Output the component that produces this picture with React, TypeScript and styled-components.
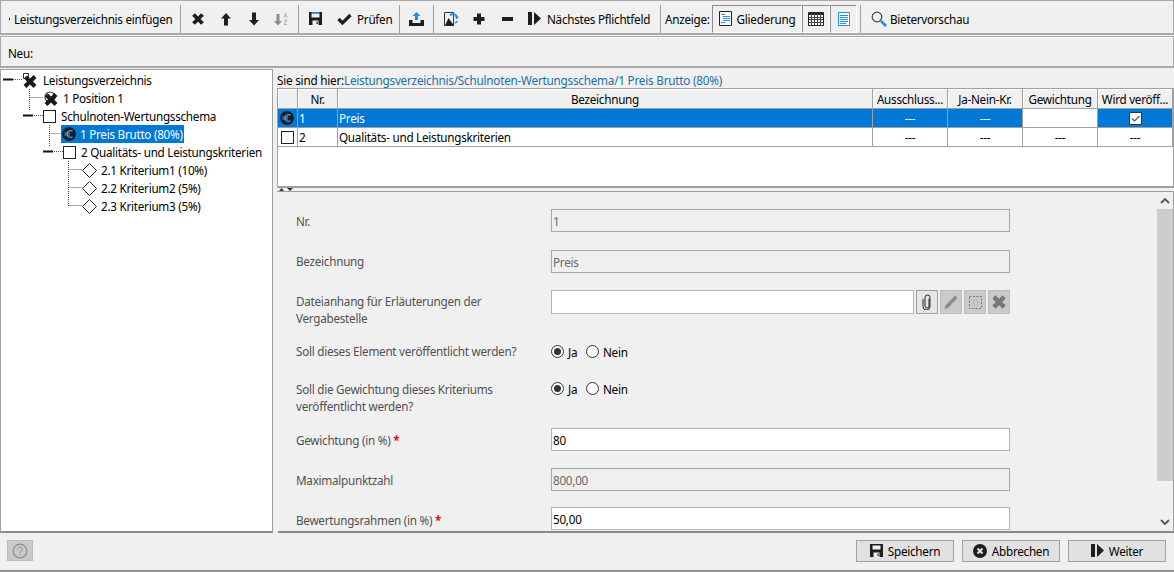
import React from "react";
import styled, { createGlobalStyle } from "styled-components";

const Global = createGlobalStyle`
  html, body { margin: 0; padding: 0; background: #f0f0f0; }
  body { font-family: "Noto Sans", "Open Sans", sans-serif; font-size: 11.7px; color: #000; overflow: hidden; }
  * { box-sizing: border-box; }
`;

const LS = "-0.26px";

const Page = styled.div`
  width: 1174px; height: 572px; display: flex; flex-direction: column; background: #f0f0f0; overflow: hidden;
`;
const Toolbar = styled.div`
  height: 35px; flex: none; display: flex; align-items: center; padding: 3px 0 0 1px;
  border: 1px solid #a9a9a9; border-width: 1px 1px 2px 1px;
`;
const Label = styled.span`
  white-space: nowrap; letter-spacing: ${LS}; line-height: 16px;
`;
const InsertItem = styled.div`
  width: 174px; display: flex; align-items: center; padding-left: 7px; gap: 4px;
`;
const Dot = styled.span`width: 1px; height: 2px; background: #222; margin-top: 1px;`;
const Sep = styled.div<{ $ml?: number }>`
  width: 8px; height: 28px; flex: none; display: flex; justify-content: center; margin-left: ${p => p.$ml ?? 0}px;
  &::before { content: ""; width: 1px; height: 100%; background: #a0a0a0; }
`;
const ToolBtn = styled.div<{ $w?: number; $pl?: number; $gap?: number }>`
  width: ${p => p.$w ?? 28}px; height: 26px; flex: none; display: flex; align-items: center;
  justify-content: ${p => (p.$pl != null ? "flex-start" : "center")};
  padding-left: ${p => p.$pl ?? 0}px; gap: ${p => p.$gap ?? 5}px;
`;
const ViewLabel = styled(Label)`width: 47px; margin-left: 1px; flex: none;`;
const Toggle = styled.div<{ $w: number }>`
  width: ${p => p.$w}px; height: 28px; flex: none; display: flex; align-items: center; justify-content: center; gap: 5px;
  border: 1px solid; border-color: #8c8c8c #fff #fff #8c8c8c;
`;
const NewBar = styled.div`
  height: 32px; flex: none; margin-top: 1px; display: flex; align-items: center; padding: 2px 0 0 7px;
  border: 1px solid #a9a9a9; border-width: 1px 1px 2px 1px; box-shadow: inset 0 1px 0 #fff;
`;
const Body = styled.div`flex: 1; min-height: 0; display: flex; margin-top: 1px; gap: 4px;`;
const TreePane = styled.div`
  width: 273px; flex: none; background: #fff; border: 1px solid #a0a0a0; border-bottom: 2px solid #8a8a8a;
  padding-top: 1px;
`;
const TreeRowEl = styled.div`height: 18px; display: flex; align-items: center;`;
const TreeItem = styled.div<{ $sel?: boolean; $gap: number }>`
  height: 18px; display: flex; align-items: center; gap: ${p => p.$gap}px; padding: 0 1px 0 ${p => (p.$sel ? 1 : 0)}px;
  background: ${p => (p.$sel ? "#0078d7" : "transparent")}; color: ${p => (p.$sel ? "#fff" : "#000")};
`;
const RightPane = styled.div`flex: 1; min-width: 0; display: flex; flex-direction: column;`;
const Crumbs = styled.div`height: 19px; flex: none; padding: 3px 0 0 0; line-height: 16px; white-space: nowrap; letter-spacing: -0.21px;`;
const Crumb = styled.span`color: #1a6fa8;`;
const TableWrap = styled.div`
  height: 100px; flex: none; background: #fff; border: 1px solid #a0a0a0; border-width: 1px 1px 2px 1px; overflow: hidden;
`;
const Grid = styled.table`
  border-collapse: separate; border-spacing: 0; table-layout: fixed; width: 895px;
`;
const Th = styled.th<{ $w: number }>`
  width: ${p => p.$w}px; height: 20px; padding: 0; font-weight: 400; text-align: center; background: #f0f0f0;
  border-bottom: 1px solid #a0a0a0; border-right: 1px solid #a0a0a0; box-shadow: inset 1px 1px 0 #fff;
  white-space: nowrap; overflow: hidden; letter-spacing: ${LS}; line-height: 16px;
`;
const Td = styled.td<{ $sel?: boolean; $center?: boolean; $white?: boolean }>`
  height: 19px; padding: 0 0 0 ${p => (p.$center ? 0 : 1)}px; text-align: ${p => (p.$center ? "center" : "left")};
  background: ${p => (p.$white ? "#fff" : p.$sel ? "#0078d7" : "#fff")}; color: ${p => (p.$sel ? "#fff" : "#000")};
  border-bottom: 1px solid #a0a0a0; border-right: 1px solid #a0a0a0; line-height: 16px; letter-spacing: ${LS}; white-space: nowrap;
`;
const IconTd = styled(Td)`padding: 0;`;
const IconCell = styled.div<{ $pr?: number }>`display: flex; align-items: center; justify-content: center; height: 18px; padding-right: ${p => p.$pr ?? 0}px;`;
const Splitter = styled.div`
  height: 4px; flex: none; display: flex; padding-left: 2px; gap: 3px; align-items: flex-start; border-bottom: 1px solid #a0a0a0;
`;
const FormPane = styled.div`
  flex: 1; min-height: 0; display: flex; overflow: hidden; border: 1px solid #a0a0a0; border-width: 0 1px 2px 0; border-bottom-color: #8a8a8a; margin-left: 1px;
`;
const FormBody = styled.div`
  flex: 1; min-width: 0; overflow: hidden; padding: 17px 0 0 18px; color: #505050;
`;
const FormRow = styled.div<{ $h: number }>`
  height: ${p => p.$h}px; display: grid; grid-template-columns: 255px 459px; align-items: start;
`;
const FieldLabel = styled.div<{ $top?: number }>`
  padding-top: ${p => p.$top ?? 4}px; line-height: 17px; letter-spacing: ${LS}; width: 240px;
`;
const Req = styled.span`color: #e01010; font-weight: 700;`;
const Input = styled.div<{ $off?: boolean }>`
  height: 23px; border: 1px solid ${p => (p.$off ? "#a8a8a8" : "#b4b4b4")}; background: ${p => (p.$off ? "#efefef" : "#fff")};
  color: ${p => (p.$off ? "#666" : "#000")}; padding: 0 0 0 1px; line-height: 22px; letter-spacing: ${LS}; white-space: nowrap;
`;
const FileRow = styled.div`display: flex; gap: 2px;`;
const FileInput = styled(Input)`width: 363px; height: 24px;`;
const SquareBtn = styled.div<{ $off?: boolean }>`
  width: 22px; height: 24px; flex: none; display: flex; align-items: center; justify-content: center;
  background: ${p => (p.$off ? "#cacaca" : "#e6e6e6")}; border: 1px solid ${p => (p.$off ? "#bdbdbd" : "#a0a0a0")};
`;
const Radios = styled.div`display: flex; align-items: center; gap: 4px; color: #000; height: 17px; margin-top: 1px; letter-spacing: ${LS};`;
const RadioCircle = styled.span<{ $on?: boolean }>`
  width: 13px; height: 13px; border-radius: 50%; border: 1px solid #333; background: #fff; display: flex; align-items: center; justify-content: center; flex: none;
  &::after { content: ""; width: 7px; height: 7px; border-radius: 50%; background: ${p => (p.$on ? "#333" : "transparent")}; }
`;
const JaText = styled.span`width: 14px; flex: none;`;
const Scrollbar = styled.div`
  width: 16px; flex: none; display: flex; flex-direction: column; background: #f0f0f0;
`;
const ScrollArrow = styled.div`height: 17px; flex: none; display: flex; align-items: center; justify-content: center;`;
const ScrollThumb = styled.div`flex: 1; background: #cdcdcd; margin-bottom: 33px;`;
const ScrollTrack = styled.div`flex: 1; display: flex; flex-direction: column;`;
const Footer = styled.div`
  height: 39px; flex: none; display: flex; align-items: center; padding: 0 8px 2px 7px; border-bottom: 2px solid #8f8f8f; gap: 8px;
`;
const HelpBtn = styled.div`
  width: 26px; height: 21px; background: #cacaca; border: 1px solid #bdbdbd; display: flex; align-items: center; justify-content: center; margin-right: auto;
`;
const FooterBtn = styled.div`
  width: 98px; height: 22px; background: #e1e1e1; border: 1px solid #a0a0a0; display: flex; align-items: center; justify-content: center; gap: 5px;
  letter-spacing: ${LS}; line-height: 16px;
`;

const D = "#1e1e1e";
const B = "#1f8fe8";
const XIcon = ({ s = 14, c = D }: { s?: number; c?: string }) => (
  <svg width={s} height={s} viewBox="0 0 14 14"><path d="M2.5 2.5l9 9M11.5 2.5l-9 9" stroke={c} strokeWidth="3.8" fill="none" /></svg>
);
const UpIcon = () => (<svg width="12" height="14" viewBox="0 0 12 14"><path d="M6 1L11 6.5H8V13.5H4V6.5H1z" fill={D} /></svg>);
const DownIcon = () => (<svg width="12" height="14" viewBox="0 0 12 14"><path d="M6 13.5L11 8H8V.5H4V8H1z" fill={D} /></svg>);
const SortIcon = () => (
  <svg width="16" height="14" viewBox="0 0 16 14">
    <path d="M5 13.5L9 9H6.5V2h-3v7H1z" fill="#8c8c8c" />
    <path d="M11 5.5L12.5 1 14 5.5M11.5 4h2M11 8h3l-3 4.5h3" stroke="#b0b0b0" strokeWidth="1" fill="none" />
  </svg>
);
const SaveIcon = ({ top = B }: { top?: string }) => (
  <svg width="13" height="13" viewBox="0 0 13 13">
    <path d="M0 0h13v13H0z" fill={D} />
    <path d="M2.5 1.5h8v4h-8z" fill="#f0f0f0" />
    <path d="M2.5 0h8v1h-8z" fill={top} />
    <path d="M3.5 8.5h6V13h-6z" fill="#f0f0f0" />
    <path d="M7.5 9.5h1.2V12H7.5z" fill={D} />
  </svg>
);
const CheckIcon = () => (<svg width="15" height="12" viewBox="0 0 15 12"><path d="M1.5 6l4 4 8-8" stroke={D} strokeWidth="3.2" fill="none" /></svg>);
const UploadIcon = () => (
  <svg width="15" height="14" viewBox="0 0 15 14">
    <path d="M7.5 0L11.5 4H9V8H6V4H3.5z" fill={B} />
    <path d="M0 8h3.5v3h8V8H15v6H0z" fill={D} />
  </svg>
);
const ImageIcon = () => (
  <svg width="15" height="14" viewBox="0 0 15 14">
    <path d="M.5.5h9v13h-9z" fill="#f0f0f0" stroke="#333" />
    <path d="M1 13.5L4.5 6 10 13.5z" fill={D} />
    <path d="M6 3.5a4 4 0 0 1 7 1.5" stroke={B} strokeWidth="1.8" fill="none" />
    <path d="M10.8 4.5h4L12.8 7.5z" fill={B} />
    <path d="M13.5 9a4 4 0 0 1-2.500 2" stroke={B} strokeWidth="1.6" fill="none" />
  </svg>
);
const PlusIcon = () => (<svg width="12" height="12" viewBox="0 0 12 12"><path d="M4 .5h4V4h3.5v4H8v3.500H4V8H.5V4H4z" fill={D} /></svg>);
const MinusIcon = () => (<svg width="11" height="4" viewBox="0 0 11 4"><path d="M0 0h11v4H0z" fill={D} /></svg>);
const NextIcon = ({ c = D }: { c?: string }) => (
  <svg width="13" height="13" viewBox="0 0 13 13"><path d="M0 0h4v13H0zM6 0l7 6.5L6 13z" fill={c} /></svg>
);
const OutlineIcon = () => (
  <svg width="13" height="15" viewBox="0 0 13 15">
    <path d="M.5.5h12v14H.5z" fill="#fff" stroke="#222" />
    <path d="M2 3.5h4M4 5.5h7M4 7.500h7M4 9.500h7M2 11.500h4" stroke={B} strokeWidth="1" />
  </svg>
);
const TableIcon = () => (
  <svg width="16" height="14" viewBox="0 0 16 14">
    <path d="M.5.5h15v13H.5z" fill="#fff" stroke="#222" />
    <path d="M.5 2h15" stroke="#222" strokeWidth="2" />
    <path d="M3.5 1v12M6.500 1v12M9.500 1v12M12.500 1v12M1 5.500h14M1 7.500h14M1 10.500h14" stroke="#444" strokeWidth="1" />
  </svg>
);
const ListIcon = () => (
  <svg width="12" height="14" viewBox="0 0 12 14">
    <path d="M.5.5h11v13H.5z" fill="#fff" stroke={B} />
    <path d="M2 3.500h8M2 5.500h8M2 7.500h8M2 9.500h8M2 11.500h6" stroke={B} strokeWidth="1" />
  </svg>
);
const SearchIcon = () => (
  <svg width="16" height="16" viewBox="0 0 16 16">
    <circle cx="6" cy="6" r="4.8" fill="none" stroke="#444" strokeWidth="1.2" />
    <path d="M10 10l5 5" stroke={B} strokeWidth="2.6" />
  </svg>
);
const ClipIcon = () => (
  <svg width="10" height="16" viewBox="0 0 10 16">
    <path d="M7 4.5V12a2 2 0 0 1-4 0V3.5a2.500 2.500 0 0 1 5 0V12.500a3.500 3.500 0 0 1-7 0V5" fill="none" stroke="#222" strokeWidth="1" />
  </svg>
);
const PenIcon = () => (
  <svg width="16" height="16" viewBox="0 0 16 16"><path d="M12 1.5l2.500 2.500L5 14l-3.500 1 1-3.500z" fill="#8c8c8c" /></svg>
);
const SelectIcon = () => (
  <svg width="13" height="13" viewBox="0 0 13 13"><path d="M.5.5h12v12H.5z" fill="none" stroke="#777" strokeDasharray="2 1.5" /><circle cx="6.5" cy="6.5" r="2.5" fill="none" stroke="#b5b5b5" /></svg>
);
const StopIcon = () => (
  <svg width="14" height="14" viewBox="0 0 14 14">
    <circle cx="7" cy="7" r="7" fill={D} />
    <path d="M4.5 4.5l5 5M9.500 4.500l-5 5" stroke="#e1e1e1" strokeWidth="2" />
  </svg>
);
const HelpIcon = () => (
  <svg width="16" height="16" viewBox="0 0 16 16">
    <circle cx="8" cy="8" r="6.8" fill="none" stroke="#8a8a8a" strokeWidth="1.2" />
    <path d="M5.8 6.3a2.200 2.200 0 1 1 3.300 1.900C8.300 8.700 8 9 8 10" fill="none" stroke="#a8a8a8" strokeWidth="1.5" />
    <path d="M7.2 11h1.600v1.500H7.200z" fill="#a8a8a8" />
  </svg>
);
const EuroIcon = () => (
  <svg width="14" height="14" viewBox="0 0 14 14" style={{ flex: "none" }}>
    <circle cx="7" cy="7" r="7" fill="#16212c" />
    <path d="M10.5 4.2A3.500 3.500 0 0 0 5 7a3.500 3.500 0 0 0 5.500 2.800" fill="none" stroke="#4aa8ee" strokeWidth="1.2" />
    <path d="M2.5 6h5.500M2.500 8h5.500" stroke="#4aa8ee" strokeWidth="1" />
  </svg>
);
const ToolsIcon = ({ ring }: { ring?: boolean }) => (
  <svg width="16" height="15" viewBox="0 0 16 15" style={{ flex: "none" }}>
    {ring
      ? <circle cx="7" cy="6" r="5" fill="none" stroke="#333" strokeWidth="1.2" />
      : <path d="M1.5.5h5v5h-5z" fill="#fff" stroke="#333" />}
    <path d="M3.5 4l9.500 9.500M13 3.500L3 13.500" stroke="#1a1a1a" strokeWidth="4.2" fill="none" />
  </svg>
);
const BoxIcon = () => (
  <svg width="13" height="13" viewBox="0 0 13 13" style={{ flex: "none" }}>
    <rect x="0.5" y="0.5" width="12" height="12" fill="#fff" stroke="#222" />
  </svg>
);
const DiamondIcon = () => (
  <svg width="15" height="15" viewBox="0 0 15 15" style={{ flex: "none" }}>
    <path d="M7.5.5l7 7-7 7-7-7z" fill="#fff" stroke="#222" />
  </svg>
);

type Kind = "tools" | "toolsRing" | "box" | "euro" | "diamond";
type TreeDef = { text: string; w: number; dots?: string; minus?: number; kind: Kind; gap: number; sel?: boolean };

const rows: TreeDef[] = [
  { text: "Leistungsverzeichnis", w: 21, dots: "M12 8.5h10", minus: 2, kind: "tools", gap: 5 },
  { text: "1 Position 1", w: 42, dots: "M28.5 0v18M28.5 8.5h13", kind: "toolsRing", gap: 4 },
  { text: "Schulnoten-Wertungsschema", w: 42, dots: "M28.5 0v3M33 8.5h9", minus: 22, kind: "box", gap: 5 },
  { text: "1 Preis Brutto (80%)", w: 60, dots: "M48.5 0v18M48.5 8.5h12", kind: "euro", gap: 4, sel: true },
  { text: "2 Qualitäts- und Leistungskriterien", w: 62, dots: "M48.5 0v3M53 8.5h9", minus: 42, kind: "box", gap: 5 },
  { text: "2.1 Kriterium1 (10%)", w: 81, dots: "M67.5 0v18M67.5 8.5h13", kind: "diamond", gap: 4 },
  { text: "2.2 Kriterium2 (5%)", w: 81, dots: "M67.5 0v18M67.5 8.5h13", kind: "diamond", gap: 4 },
  { text: "2.3 Kriterium3 (5%)", w: 81, dots: "M67.5 0v9M67.5 8.5h13", kind: "diamond", gap: 4 },
];

const Gutter = ({ r }: { r: TreeDef }) => (
  <svg width={r.w} height="18" viewBox={`0 0 ${r.w} 18`} style={{ flex: "none", display: "block" }}>
    {r.dots && <path d={r.dots} stroke="#555" strokeDasharray="1 1" fill="none" />}
    {r.minus != null && <rect x={r.minus} y="7.5" width="10" height="2" fill="#111" />}
  </svg>
);

const TreeIcon = ({ kind }: { kind: Kind }) => {
  if (kind === "tools") return <ToolsIcon />;
  if (kind === "toolsRing") return <ToolsIcon ring />;
  if (kind === "box") return <BoxIcon />;
  if (kind === "euro") return <EuroIcon />;
  return <DiamondIcon />;
};

const Radio = () => (
  <Radios>
    <RadioCircle $on /><JaText>Ja</JaText>
    <RadioCircle /><span>Nein</span>
  </Radios>
);

const Chevron = ({ up }: { up?: boolean }) => (
  <svg width="10" height="7" viewBox="0 0 10 7">
    <polyline points={up ? "1,6 5,2 9,6" : "1,1 5,5 9,1"} stroke="#555" strokeWidth="1.8" fill="none" />
  </svg>
);

export default function App() {
  return (
    <Page>
      <Global />
      <Toolbar>
        <InsertItem><Dot /><Label>Leistungsverzeichnis einfügen</Label></InsertItem>
        <Sep />
        <ToolBtn><XIcon /></ToolBtn>
        <ToolBtn><UpIcon /></ToolBtn>
        <ToolBtn><DownIcon /></ToolBtn>
        <ToolBtn $w={26}><SortIcon /></ToolBtn>
        <Sep />
        <ToolBtn $w={27}><SaveIcon /></ToolBtn>
        <ToolBtn $w={66} $pl={8}><CheckIcon /><Label>Prüfen</Label></ToolBtn>
        <Sep />
        <ToolBtn $w={26}><UploadIcon /></ToolBtn>
        <Sep />
        <ToolBtn><ImageIcon /></ToolBtn>
        <ToolBtn><PlusIcon /></ToolBtn>
        <ToolBtn><MinusIcon /></ToolBtn>
        <ToolBtn $w={135} $pl={7} $gap={6}><NextIcon /><Label>Nächstes Pflichtfeld</Label></ToolBtn>
        <Sep />
        <ViewLabel>Anzeige:</ViewLabel>
        <Toggle $w={90}><OutlineIcon /><Label>Gliederung</Label></Toggle>
        <Toggle $w={28}><TableIcon /></Toggle>
        <Toggle $w={27}><ListIcon /></Toggle>
        <Sep $ml={-1} />
        <ToolBtn $w={110} $pl={7} $gap={3}><SearchIcon /><Label>Bietervorschau</Label></ToolBtn>
      </Toolbar>
      <NewBar><Label>Neu:</Label></NewBar>
      <Body>
        <TreePane>
          {rows.map(r => (
            <TreeRowEl key={r.text}>
              <Gutter r={r} />
              <TreeItem $sel={r.sel} $gap={r.gap}>
                <TreeIcon kind={r.kind} />
                <Label>{r.text}</Label>
              </TreeItem>
            </TreeRowEl>
          ))}
        </TreePane>
        <RightPane>
          <Crumbs>
            Sie sind hier:<Crumb>Leistungsverzeichnis/Schulnoten-Wertungsschema/1 Preis Brutto (80%)</Crumb>
          </Crumbs>
          <TableWrap>
            <Grid>
              <thead>
                <tr>
                  <Th $w={20} />
                  <Th $w={40}>Nr.</Th>
                  <Th $w={535}>Bezeichnung</Th>
                  <Th $w={75}>Ausschluss...</Th>
                  <Th $w={75}>Ja-Nein-Kr.</Th>
                  <Th $w={75}>Gewichtung</Th>
                  <Th $w={75}>Wird veröff...</Th>
                </tr>
              </thead>
              <tbody>
                <tr>
                  <IconTd $sel $center><IconCell $pr={1}><EuroIcon /></IconCell></IconTd>
                  <Td $sel>1</Td>
                  <Td $sel>Preis</Td>
                  <Td $sel $center>---</Td>
                  <Td $sel $center>---</Td>
                  <Td $white $center />
                  <IconTd $sel $center>
                    <IconCell>
                      <svg width="13" height="13" viewBox="0 0 13 13"><path d="M.5.5h12v12H.5z" fill="#fff" stroke="#333" /><path d="M3 6.5l2.500 2.500 5-5" fill="none" stroke="#555" strokeWidth="1.2" /></svg>
                    </IconCell>
                  </IconTd>
                </tr>
                <tr>
                  <IconTd $center><IconCell $pr={1}><BoxIcon /></IconCell></IconTd>
                  <Td>2</Td>
                  <Td>Qualitäts- und Leistungskriterien</Td>
                  <Td $center>---</Td>
                  <Td $center>---</Td>
                  <Td $center>---</Td>
                  <Td $center>---</Td>
                </tr>
              </tbody>
            </Grid>
          </TableWrap>
          <Splitter>
            <svg width="5" height="3" viewBox="0 0 5 3"><path d="M2.5 0L5 3H0z" fill="#333" /></svg>
            <svg width="6" height="3" viewBox="0 0 6 3"><path d="M0 0h6L3 3z" fill="#333" /></svg>
          </Splitter>
          <FormPane>
            <FormBody>
              <FormRow $h={41}><FieldLabel>Nr.</FieldLabel><Input $off>1</Input></FormRow>
              <FormRow $h={40}><FieldLabel $top={3}>Bezeichnung</FieldLabel><Input $off>Preis</Input></FormRow>
              <FormRow $h={52}>
                <FieldLabel $top={3}>Dateianhang für Erläuterungen der Vergabestelle</FieldLabel>
                <FileRow>
                  <FileInput />
                  <SquareBtn><ClipIcon /></SquareBtn>
                  <SquareBtn $off><PenIcon /></SquareBtn>
                  <SquareBtn $off><SelectIcon /></SquareBtn>
                  <SquareBtn $off><XIcon s={16} c="#777" /></SquareBtn>
                </FileRow>
              </FormRow>
              <FormRow $h={37}>
                <FieldLabel $top={1}>Soll dieses Element veröffentlicht werden?</FieldLabel>
                <Radio />
              </FormRow>
              <FormRow $h={49}>
                <FieldLabel $top={2}>Soll die Gewichtung dieses Kriteriums veröffentlicht werden?</FieldLabel>
                <Radio />
              </FormRow>
              <FormRow $h={40}><FieldLabel>Gewichtung (in %) <Req>*</Req></FieldLabel><Input>80</Input></FormRow>
              <FormRow $h={39}><FieldLabel>Maximalpunktzahl</FieldLabel><Input $off>800,00</Input></FormRow>
              <FormRow $h={40}><FieldLabel $top={5}>Bewertungsrahmen (in %) <Req>*</Req></FieldLabel><Input>50,00</Input></FormRow>
            </FormBody>
            <Scrollbar>
              <ScrollArrow><Chevron up /></ScrollArrow>
              <ScrollTrack><ScrollThumb /></ScrollTrack>
              <ScrollArrow><Chevron /></ScrollArrow>
            </Scrollbar>
          </FormPane>
        </RightPane>
      </Body>
      <Footer>
        <HelpBtn><HelpIcon /></HelpBtn>
        <FooterBtn><SaveIcon top={D} /><Label>Speichern</Label></FooterBtn>
        <FooterBtn><StopIcon /><Label>Abbrechen</Label></FooterBtn>
        <FooterBtn><NextIcon /><Label>Weiter</Label></FooterBtn>
      </Footer>
    </Page>
  );
}
